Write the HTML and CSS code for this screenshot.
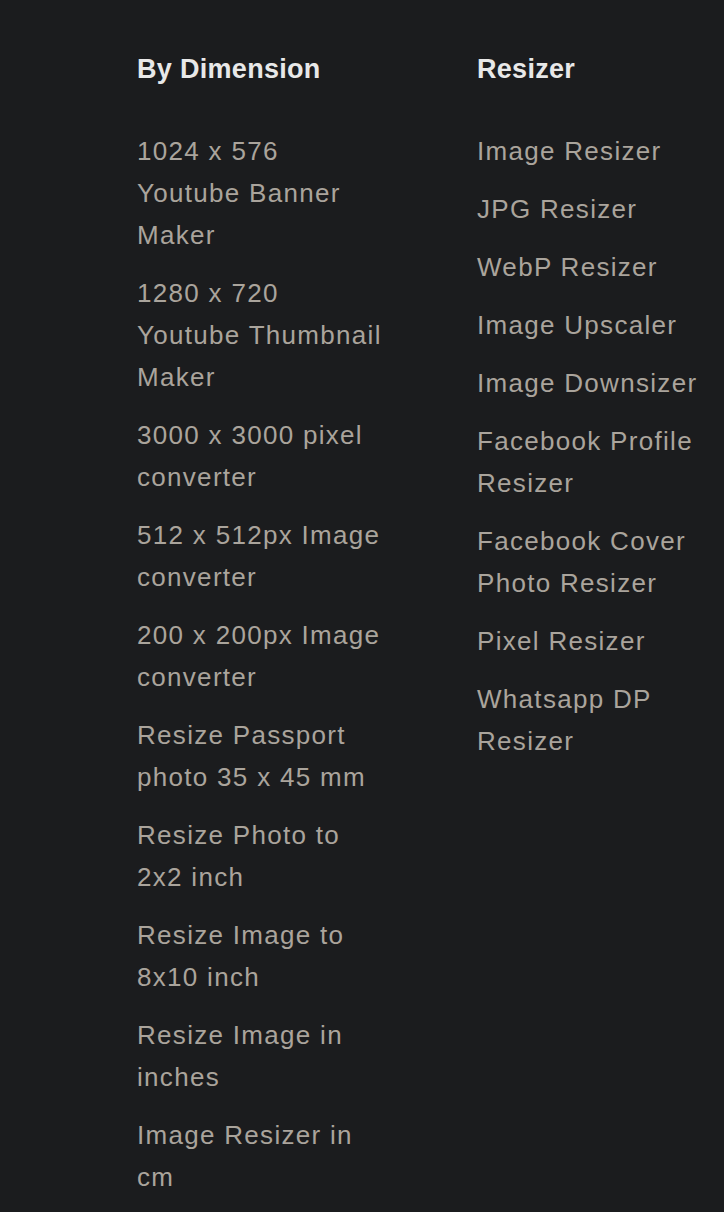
FILE: index.html
```html
<!DOCTYPE html>
<html lang="en">
<head>
    <meta charset="UTF-8">
    <meta name="viewport" content="width=device-width, initial-scale=1.0">
    <title>Tools</title>
    <link rel="stylesheet" href="styles.css">
</head>
<body>
    <div class="footer">
        <div class="col">
            <h3>By Dimension</h3>
            <ul>
                <li><a href="#">1024 x 576<br>Youtube Banner Maker</a></li>
                <li><a href="#">1280 x 720<br>Youtube Thumbnail Maker</a></li>
                <li><a href="#">3000 x 3000 pixel converter</a></li>
                <li><a href="#">512 x 512px Image converter</a></li>
                <li><a href="#">200 x 200px Image converter</a></li>
                <li><a href="#">Resize Passport photo 35 x 45 mm</a></li>
                <li><a href="#">Resize Photo to 2x2 inch</a></li>
                <li><a href="#">Resize Image to 8x10 inch</a></li>
                <li><a href="#">Resize Image in inches</a></li>
                <li><a href="#">Image Resizer in cm</a></li>
            </ul>
        </div>
        <div class="col">
            <h3>Resizer</h3>
            <ul>
                <li><a href="#">Image Resizer</a></li>
                <li><a href="#">JPG Resizer</a></li>
                <li><a href="#">WebP Resizer</a></li>
                <li><a href="#">Image Upscaler</a></li>
                <li><a href="#">Image Downsizer</a></li>
                <li><a href="#">Facebook Profile Resizer</a></li>
                <li><a href="#">Facebook Cover Photo Resizer</a></li>
                <li><a href="#">Pixel Resizer</a></li>
                <li><a href="#">Whatsapp DP Resizer</a></li>
            </ul>
        </div>
    </div>
</body>
</html>
```

FILE: styles.css
```css
body {
    margin: 0;
    background-color: #1b1c1e;
    font-family: "Liberation Sans", Arial, sans-serif;
}

.footer {
    display: grid;
    grid-template-columns: 255px 240px;
    column-gap: 85px;
    padding: 50px 0 0 137px;
}

.col h3 {
    margin: 0 0 42px;
    font-size: 27px;
    line-height: 38px;
    font-weight: 600;
    color: #e8e8e8;
    letter-spacing: 0.3px;
}

.col ul {
    list-style: none;
    margin: 0;
    padding: 0;
    display: flex;
    flex-direction: column;
    gap: 16px;
}

.col li {
    font-size: 26px;
    line-height: 42px;
    letter-spacing: 1.3px;
}

.col a {
    color: #aaa49c;
    text-decoration: none;
}
```
